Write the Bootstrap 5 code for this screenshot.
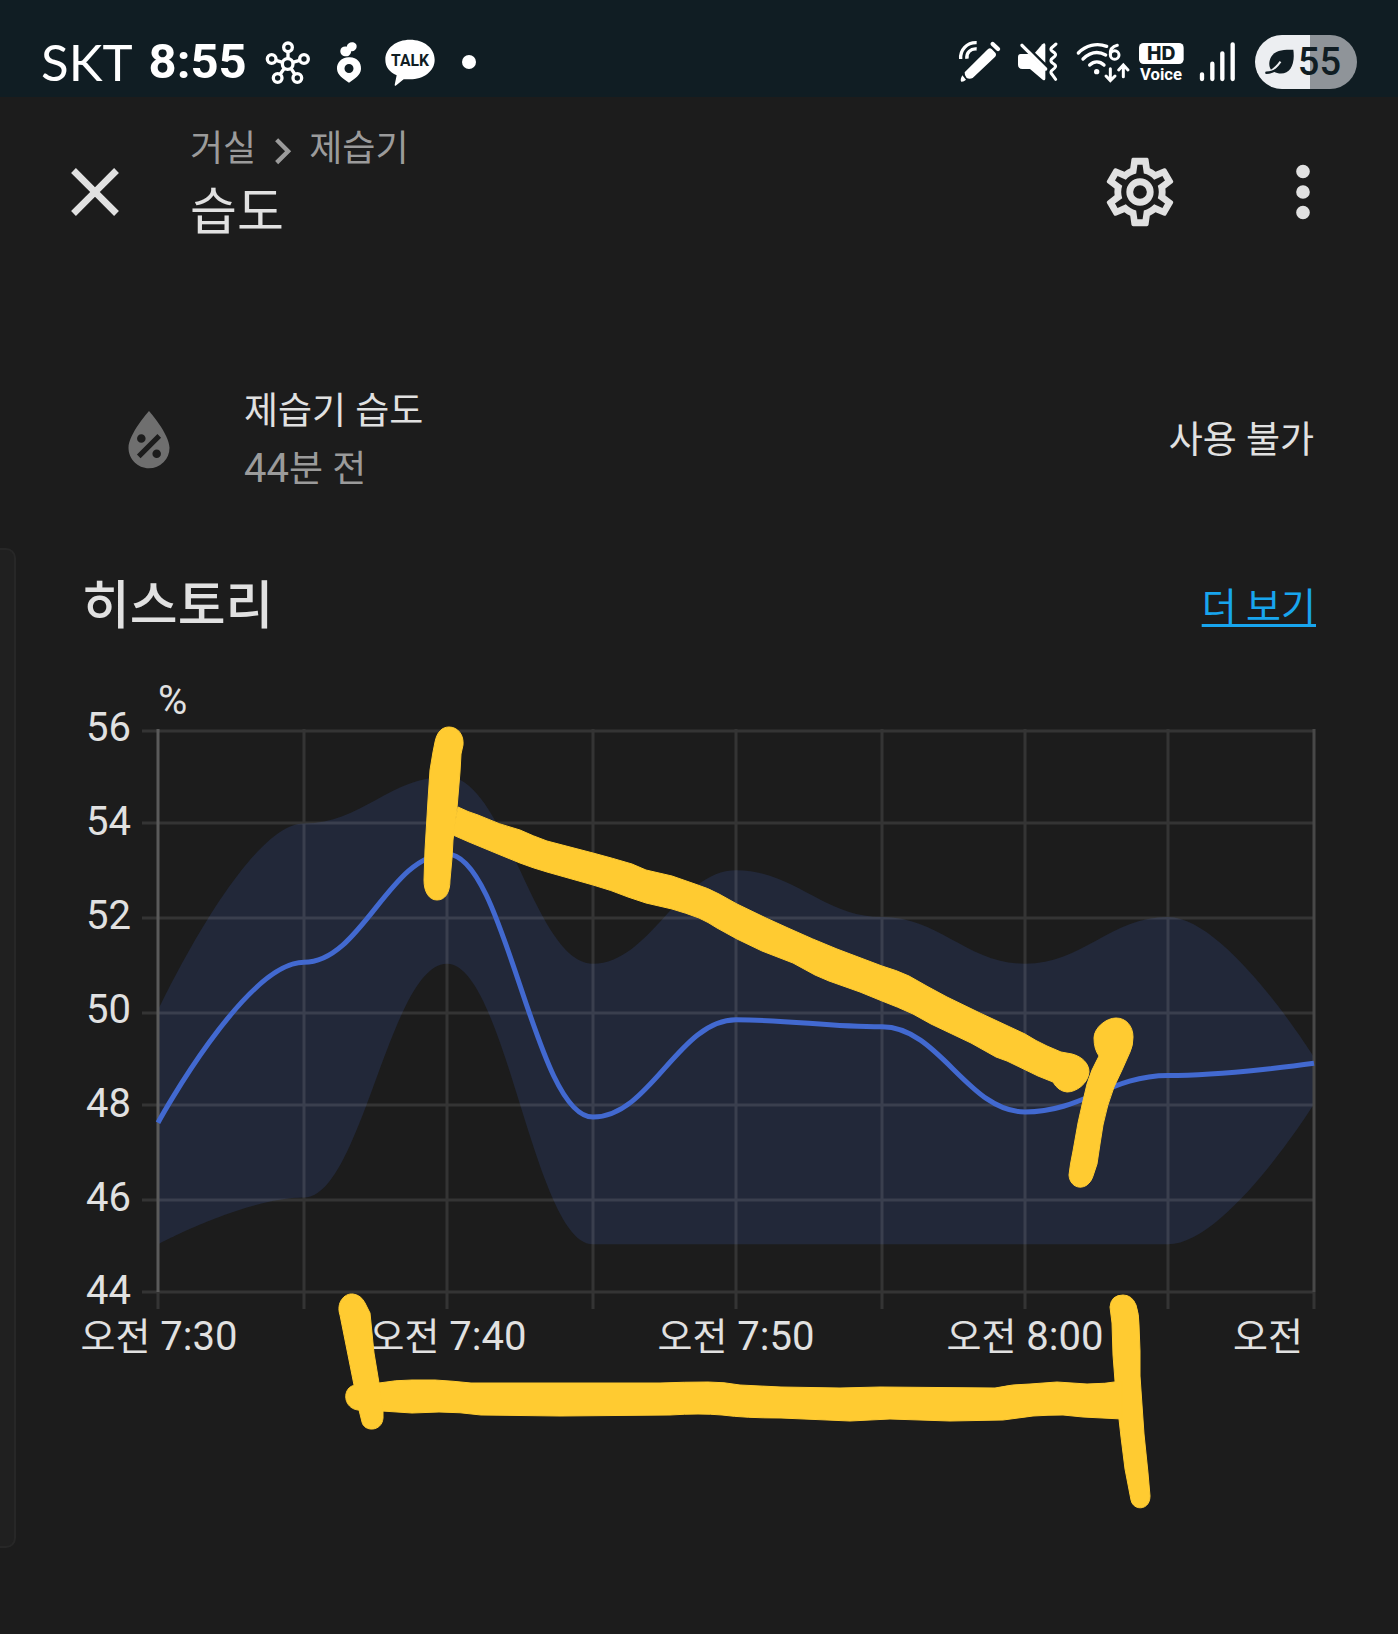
<!DOCTYPE html>
<html lang="ko">
<head>
<meta charset="utf-8">
<meta name="viewport" content="width=device-width, initial-scale=1">
<title>습도</title>
<link href="https://cdn.jsdelivr.net/npm/bootstrap@5.3.0/dist/css/bootstrap.min.css" rel="stylesheet">
<style>
  body { background: #1c1c1c; color: #e1e1e1; font-family: Roboto, "Noto Sans CJK KR", sans-serif; font-size: 38px; overflow-x: hidden; }
  svg { display: block; flex: none; }
  .status-bar { background: #101d23; color: #fff; height: 97px; padding: 27px 41px 0; }
  .status-bar svg { overflow: visible; }
  .status-side { height: 70px; }
  .notices { gap: 22px; }
  .carrier { font-family: Lato, Roboto, sans-serif; font-size: 51px; font-weight: 400; line-height: 70px; }
  .clock { font-size: 49px; font-weight: 700; line-height: 70px; }
  .battery { width: 102px; height: 54px; border-radius: 27px; color: #101d23; background: linear-gradient(90deg, #eceef1 54%, #8f9499 54%); font-size: 38px; font-weight: 500; line-height: 54px; padding: 0 16px 0 10px; }
  .dialog-head { padding: 26px 54px 0; }
  .icon-btn { background: none; border: 0; padding: 0; color: #e1e1e1; }
  .head-text { margin-left: 54px; padding-bottom: 10px; }
  .crumbs { color: #9b9b9b; font-size: 36px; line-height: 52px; }
  .dialog-title { font-size: 51px; font-weight: 400; line-height: 76px; margin: 0; }
  .head-actions { gap: 81px; }
  .state-row { margin-top: 122px; padding: 0 84px 0 108px; font-size: 37px; line-height: 58px; }
  .state-info { margin-left: 54px; }
  .dim { color: #9b9b9b; }
  .digits { font-size: 40px; line-height: 1; }
  .history-head { margin-top: 68px; padding: 0 82px; height: 80px; }
  .history-title { font-size: 52px; font-weight: 500; line-height: 80px; margin: 0; }
  .more-link { color: #18a5ee; line-height: 80px; text-decoration-thickness: 3px; text-underline-offset: 4px; }
  .chart { width: 100%; height: auto; }
  .chart text { fill: #e1e1e1; font-size: 40px; }
  .chart .hangul { font-size: 38px; }
  .edge-handle { position: absolute; left: -16px; top: 548px; width: 32px; height: 1000px; border: 2px solid #272727; border-radius: 10px; background: #202020; }
</style>
<script src="https://cdn.jsdelivr.net/npm/bootstrap@5.3.0/dist/js/bootstrap.bundle.min.js"></script>
</head>
<body>
<header class="status-bar d-flex justify-content-between">
  <div class="status-side d-flex align-items-center">
    <span class="carrier">SKT</span>
    <span class="clock mx-3">8:55</span>
    <div class="notices d-flex align-items-center">
      <svg width="50" height="56" viewBox="786 42 150 168" fill="none" stroke="#fff" stroke-width="10" aria-hidden="true">
        <circle cx="860" cy="132" r="16"/><circle cx="861" cy="82" r="13"/><circle cx="812" cy="117" r="13"/><circle cx="909" cy="117" r="13"/><circle cx="830" cy="174" r="13"/><circle cx="889" cy="174" r="13"/>
        <path d="M861 96V116M825 121L845 127M896 121L875 127M838 162L850 145M881 162L870 145"/>
      </svg>
      <svg width="28" height="56" viewBox="1002 42 84 168" fill="#fff" aria-hidden="true">
        <path fill-rule="evenodd" d="M1043 112C1066 110 1081 126 1080 147C1079 166 1061 176 1044 188C1027 176 1009 166 1008 147C1007 128 1022 112 1043 112ZM1044 132A13 13 0 1 0 1044 159A13 13 0 1 0 1044 132Z"/>
        <path d="M1042 108C1028 112 1017 103 1018 92C1019 81 1029 78 1037 80C1039 69 1050 64 1060 68C1070 72 1068 85 1062 90C1058 94 1054 94 1051 93C1050 100 1047 105 1042 108Z"/>
      </svg>
      <svg width="50" height="56" viewBox="1153 42 150 168" role="img" aria-label="TALK">
        <path fill="#fff" d="M1228 59C1270 59 1302 84 1302 119C1302 154 1268 178 1228 178C1221 178 1214 177 1209 178L1185 197C1181 198 1182 195 1183 190L1188 166C1166 156 1154 140 1154 119C1154 84 1187 59 1228 59Z"/>
        <text x="1228" y="137" text-anchor="middle" font-size="47" font-weight="700" fill="#101d23">TALK</text>
      </svg>
      <svg class="ms-1" width="16" height="56" viewBox="0 0 16 56" aria-hidden="true"><circle cx="8" cy="28" r="7" fill="#fff"/></svg>
    </div>
  </div>
  <div class="status-side d-flex align-items-center gap-2">
    <svg width="52" height="56" viewBox="75 42 156 168" aria-hidden="true">
      <path fill="#fff" d="M104 157L171 90Q178 82 185 87L196 98Q201 104 194 112L128 174Q118 178 110 174Q103 167 104 157ZM97 166L108 179Q101 186 94 185Q89 181 97 166Z"/>
      <path d="M188 72L204 87" stroke="#fff" stroke-width="13" stroke-linecap="round"/>
      <path d="M92 117C90 90 110 67 140 68M111 116C108 98 122 85 140 87" fill="none" stroke="#fff" stroke-width="10"/>
    </svg>
    <svg width="52" height="56" viewBox="255 42 156 168" fill="#fff" aria-hidden="true">
      <path d="M272 102H296L346 150V176Q345 184 338 179L300 147H277Q264 146 264 134V112Q264 102 272 102Z"/>
      <path d="M315 98L337 73Q346 65 346 76V128Z"/>
      <path d="M276 76L347 147" stroke="#fff" stroke-width="10" stroke-linecap="round"/>
      <path d="M378 72L364 84Q361 89 366 93L374 99Q379 104 374 109L364 118Q361 123 366 128L374 134Q379 139 374 144L364 153Q361 158 366 163L377 178" fill="none" stroke="#fff" stroke-width="9" stroke-linecap="round"/>
    </svg>
    <svg width="52" height="56" viewBox="435 42 156 168" fill="none" stroke="#fff" stroke-width="10" stroke-linecap="round" aria-hidden="true">
      <path d="M445 99C467 76 500 68 530 79M459 117C480 97 505 93 527 105M479 135C492 123 509 123 522 135"/>
      <circle cx="500" cy="155" r="8" fill="#fff" stroke="none"/>
      <path d="M562 76C545 80 540 92 541 104" stroke-width="9"/><circle cx="554" cy="105" r="13" stroke-width="9"/>
      <path d="M541 146V181M528 168L541 182L555 168M580 170V136M566 150L580 135L594 150" stroke-width="9"/>
    </svg>
    <svg width="52" height="56" viewBox="615 42 156 168" role="img" aria-label="HD Voice">
      <rect x="627" y="69" width="134" height="63" rx="14" fill="#fff"/>
      <text x="694" y="121" text-anchor="middle" font-size="58" font-weight="800" fill="#101d23" font-family="Inter, Roboto, sans-serif">HD</text>
      <text x="693" y="179" text-anchor="middle" font-size="50" font-weight="700" fill="#fff">Voice</text>
    </svg>
    <svg width="52" height="56" viewBox="795 42 156 168" stroke="#fff" stroke-width="13" stroke-linecap="round" aria-hidden="true">
      <path d="M816 163V177M847 131V177M877 100V177M908 73V177"/>
    </svg>
    <div class="battery d-flex align-items-center justify-content-between">
      <svg width="29" height="28" viewBox="1006 82 86 82" aria-hidden="true">
        <path fill="#101d23" d="M1090 87C1096 130 1080 161 1048 157C1040 156 1034 153 1028 150C1018 144 1015 124 1024 108C1036 88 1062 86 1090 87Z"/>
        <path d="M1010 155C1028 150 1042 136 1052 122" fill="none" stroke="#eceef1" stroke-width="6"/>
        <path d="M1010 155Q1022 155 1034 149" fill="none" stroke="#101d23" stroke-width="7" stroke-linecap="round"/>
      </svg>
      <span>55</span>
    </div>
  </div>
</header>

<main>
  <section class="dialog-head d-flex align-items-center">
    <button class="icon-btn" type="button" aria-label="닫기">
      <svg width="82" height="82" viewBox="0 0 24 24" fill="currentColor"><path d="M19,6.41L17.59,5L12,10.59L6.41,5L5,6.41L10.59,12L5,17.59L6.41,19L12,13.41L17.59,19L19,17.59L13.41,12L19,6.41Z"/></svg>
    </button>
    <div class="head-text">
      <div class="crumbs d-flex align-items-center">
        <span>거실</span>
        <svg width="53" height="52" viewBox="0 -1 24 24" fill="currentColor" aria-hidden="true"><path d="M8.59,16.58L13.17,12L8.59,7.41L10,6L16,12L10,18L8.59,16.58Z"/></svg>
        <span>제습기</span>
      </div>
      <h1 class="dialog-title">습도</h1>
    </div>
    <div class="head-actions d-flex ms-auto">
      <button class="icon-btn" type="button" aria-label="설정">
        <svg width="82" height="82" viewBox="0 0 24 24" fill="currentColor"><path d="M12,8A4,4 0 0,1 16,12A4,4 0 0,1 12,16A4,4 0 0,1 8,12A4,4 0 0,1 12,8M12,10A2,2 0 0,0 10,12A2,2 0 0,0 12,14A2,2 0 0,0 14,12A2,2 0 0,0 12,10M10,22C9.75,22 9.54,21.82 9.5,21.58L9.13,18.93C8.5,18.68 7.96,18.34 7.44,17.94L4.95,18.95C4.73,19.03 4.46,18.95 4.34,18.73L2.34,15.27C2.21,15.05 2.27,14.78 2.46,14.63L4.57,12.97L4.5,12L4.57,11L2.46,9.37C2.27,9.22 2.21,8.95 2.34,8.73L4.34,5.27C4.46,5.05 4.73,4.96 4.95,5.05L7.44,6.05C7.96,5.66 8.5,5.32 9.13,5.07L9.5,2.42C9.54,2.18 9.75,2 10,2H14C14.25,2 14.46,2.18 14.5,2.42L14.87,5.07C15.5,5.32 16.04,5.66 16.56,6.05L19.05,5.05C19.27,4.96 19.54,5.05 19.66,5.27L21.66,8.73C21.79,8.95 21.73,9.22 21.54,9.37L19.43,11L19.5,12L19.43,13L21.54,14.63C21.73,14.78 21.79,15.05 21.66,15.27L19.66,18.73C19.54,18.95 19.27,19.04 19.05,18.95L16.56,17.95C16.04,18.34 15.5,18.68 14.87,18.93L14.5,21.58C14.46,21.82 14.25,22 14,22H10M11.25,4L10.88,6.61C9.68,6.86 8.62,7.5 7.85,8.39L5.44,7.35L4.69,8.65L6.8,10.2C6.4,11.37 6.4,12.64 6.8,13.8L4.68,15.36L5.43,16.66L7.86,15.62C8.63,16.5 9.68,17.14 10.87,17.38L11.24,20H12.76L13.13,17.39C14.32,17.14 15.37,16.5 16.14,15.62L18.57,16.66L19.32,15.36L17.2,13.81C17.6,12.64 17.6,11.37 17.2,10.2L19.31,8.65L18.56,7.35L16.15,8.39C15.38,7.5 14.32,6.86 13.12,6.62L12.75,4H11.25Z"/></svg>
      </button>
      <button class="icon-btn" type="button" aria-label="메뉴">
        <svg width="82" height="82" viewBox="0 0 24 24" fill="currentColor"><path d="M12,16A2,2 0 0,1 14,18A2,2 0 0,1 12,20A2,2 0 0,1 10,18A2,2 0 0,1 12,16M12,10A2,2 0 0,1 14,12A2,2 0 0,1 12,14A2,2 0 0,1 10,12A2,2 0 0,1 12,10M12,4A2,2 0 0,1 14,6A2,2 0 0,1 12,8A2,2 0 0,1 10,6A2,2 0 0,1 12,4Z"/></svg>
      </button>
    </div>
  </section>

  <section class="state-row d-flex align-items-center">
    <svg width="82" height="82" viewBox="0 0 24 24" fill="#6f6f6f" aria-hidden="true"><path d="M12,3.25C12,3.25 6,10 6,14C6,17.32 8.69,20 12,20A6,6 0 0,0 18,14C18,10 12,3.25 12,3.25M14.47,9.97L15.53,11.03L9.53,17.03L8.47,15.97M9.75,10A1.25,1.25 0 0,1 11,11.25A1.25,1.25 0 0,1 9.75,12.5A1.25,1.25 0 0,1 8.5,11.25A1.25,1.25 0 0,1 9.75,10M14.25,14.5A1.25,1.25 0 0,1 15.5,15.75A1.25,1.25 0 0,1 14.25,17A1.25,1.25 0 0,1 13,15.75A1.25,1.25 0 0,1 14.25,14.5Z"/></svg>
    <div class="state-info">
      <div>제습기 습도</div>
      <div class="dim"><span class="digits">44</span>분 전</div>
    </div>
    <div class="ms-auto">사용 불가</div>
  </section>

  <section>
    <div class="history-head d-flex justify-content-between align-items-center">
      <h2 class="history-title">히스토리</h2>
      <a class="more-link" href="#history">더 보기</a>
    </div>
    <svg class="chart" id="history" viewBox="0 647 1398 900" role="img" aria-label="습도 히스토리">
      <path id="band" fill="#222839"/>
      <path stroke="#fff" stroke-opacity=".11" stroke-width="3" fill="none" d="M142 731H1314M142 823H1314M142 918H1314M142 1013H1314M142 1105H1314M142 1200H1314M142 1292H1314M304 729V1309M447 729V1309M593 729V1309M736 729V1309M882 729V1309M1025 729V1309M1168 729V1309M158 1292V1309M1314 1292V1309"/>
      <path stroke="#5a5a5a" stroke-width="3" d="M158 729V1292"/>
      <path stroke="#484848" stroke-width="3" d="M1314 729V1292"/>
      <path id="mean" fill="none" stroke="#4269d0" stroke-width="5"/>
      <text x="158" y="714">%</text>
      <g text-anchor="end">
        <text x="131" y="741">56</text><text x="131" y="835">54</text><text x="131" y="929">52</text><text x="131" y="1023">50</text><text x="131" y="1117">48</text><text x="131" y="1211">46</text><text x="131" y="1304">44</text>
      </g>
      <g text-anchor="middle">
        <text x="159" y="1350"><tspan class="hangul">오전</tspan> 7:30</text>
        <text x="448" y="1350"><tspan class="hangul">오전</tspan> 7:40</text>
        <text x="736" y="1350"><tspan class="hangul">오전</tspan> 7:50</text>
        <text x="1025" y="1350"><tspan class="hangul">오전</tspan> 8:00</text>
        <text x="1268" y="1350"><tspan class="hangul">오전</tspan></text>
      </g>
      <g fill="#ffcb31" stroke="#ffcb31" stroke-width="1" stroke-linejoin="round">
        <path d="M449 727C458 727 464 735 463 745L461 754L460 772L457 808L453 840L452 858L450 880C450 893 445 900 437 900C429 900 424 892 424 880L425 850L428 800L430 770L433 752L435 742C437 732 442 727 449 727Z"/>
        <path d="M458 807Q468 812 478 815Q500 825 520 830Q533 836 547 841L593 853Q612 858 632 864L646 870L672 876L695 884Q708 888 719 894L737 904L766 918L788 928Q812 939 837 949L882 966Q896 970 909 976Q928 987 947 997L980 1013L1025 1034Q1036 1041 1047 1046L1061 1052L1072 1054C1083 1057 1089 1064 1089 1072C1088 1084 1076 1092 1067 1092Q1058 1091 1053 1082L1038 1076L1007 1061L996 1057L971 1043L931 1024L913 1014Q898 1007 882 1001L860 992L829 981L815 975L793 963L762 951L737 939L717 928Q708 922 699 918Q686 913 672 909L646 903L628 897Q611 890 593 885L547 872Q533 868 520 863L498 854L469 842L453 835Z"/>
        <path d="M1116 1018C1126 1018 1133 1026 1133 1037Q1133 1046 1130 1052L1122 1070L1114 1087Q1107 1105 1103 1125L1100 1144L1097 1164L1093 1176C1088 1192 1070 1190 1069 1175Q1070 1165 1073 1151L1078 1123L1082 1105L1087 1084Q1091 1070 1099 1056Q1094 1049 1094 1038C1094 1028 1106 1018 1116 1018Z"/>
        <path d="M1123 1295Q1132 1295 1136 1305Q1139 1314 1139 1325L1140 1351L1140 1376L1144 1434L1148 1473L1150 1496C1150 1511 1133 1511 1131 1500L1125 1469L1121 1437L1119 1419L1115 1381L1113 1355L1112 1323L1110 1307Q1111 1295 1123 1295Z"/>
        <path d="M379 1383Q396 1380 412 1380H435Q453 1381 471 1383L560 1383L660 1383Q685 1382 708 1382Q724 1382 740 1385L781 1387L840 1388L880 1387L995 1388Q1013 1384 1030 1384L1057 1382L1087 1384Q1105 1384 1122 1381V1419L1083 1417L1063 1415Q1048 1415 1033 1416Q1018 1418 1003 1420L950 1421L890 1419L850 1421L781 1418Q745 1418 722 1415Q700 1413 670 1415L560 1416L481 1415Q460 1412 439 1412L412 1413L382 1411L358 1410C342 1408 342 1386 356 1385Z"/>
        <path d="M353 1294Q361 1295 365 1303L370 1313L374 1353L379 1383L383 1411V1418C382 1432 364 1432 362 1422L359 1410L354 1385L340 1315C336 1303 344 1293 353 1294Z"/>
      </g>
    </svg>
  </section>
</main>
<div class="edge-handle" aria-hidden="true"></div>

<script>
  // Five-minute samples from 7:30 to 8:10: x position, minimum, maximum and mean humidity.
  const xs   = [158, 304, 447, 593, 736, 882, 1025, 1168, 1314];
  const low  = [45, 46, 51, 45, 45, 45, 45, 45, 48];
  const high = [50, 54, 55, 51, 53, 52, 51, 52, 49];
  const mean = [47.6, 51.03, 53.35, 47.72, 49.8, 49.65, 47.83, 48.61, 48.87];
  const points = values => values.map((v, i) => [xs[i], 1291 - (v - 44) * 46.75]);
  // Smooth curve that stays monotone in x: flat tangents at every inner point.
  function curve(pts, lead) {
    let d = lead + pts[0].join(' ');
    for (let i = 1; i < pts.length; i++) {
      const [x0, y0] = pts[i - 1], [x1, y1] = pts[i], k = (x1 - x0) * 0.4;
      const a = i === 1 ? x0 : x0 + k;
      const b = i === pts.length - 1 ? x1 : x1 - k;
      d += ` C${a} ${y0} ${b} ${y1} ${x1} ${y1}`;
    }
    return d;
  }
  document.getElementById('mean').setAttribute('d', curve(points(mean), 'M'));
  document.getElementById('band').setAttribute('d', curve(points(high), 'M') + curve(points(low).reverse(), 'L') + 'Z');
</script>
</body>
</html>
